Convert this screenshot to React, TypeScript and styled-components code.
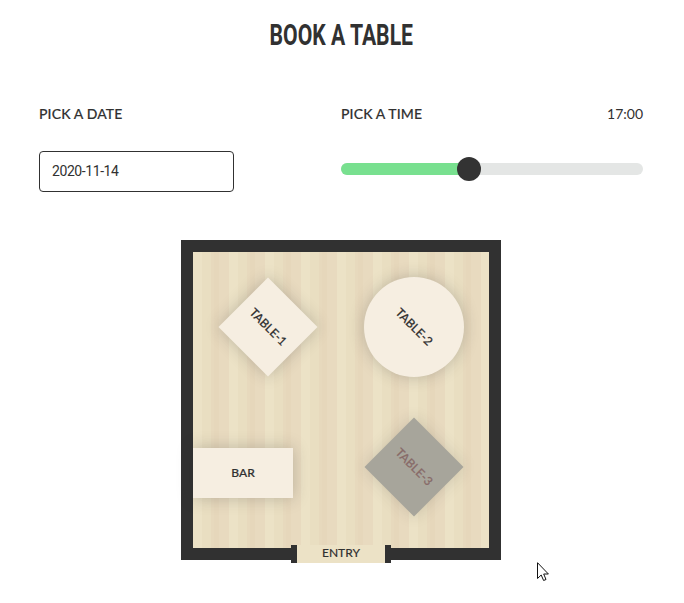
import React from "react";
import styled, { createGlobalStyle, css } from "styled-components";

const INK = "#313131";

const GlobalStyle = createGlobalStyle`
  * { box-sizing: border-box; }
  body {
    margin: 0;
    background: #fff;
    color: ${INK};
    font-family: Lato, "Open Sans", sans-serif;
    overflow: hidden;
  }
`;

const Page = styled.main`
  position: relative;
  display: flex;
  flex-direction: column;
  align-items: center;
  width: 684px;
  height: 603px;
`;

const Title = styled.h1`
  margin: 16px 2px 0 0;
  font: 700 29px/38px Roboto, sans-serif;
  white-space: nowrap;
  transform: scaleX(0.73);
`;

const Controls = styled.section`
  display: grid;
  grid-template-columns: 302px 302px;
  width: 604px;
  margin: 50px 2px 0 0;
`;

const Field = styled.div`
  display: flex;
  flex-direction: column;
`;

const Heading = styled.div`
  display: flex;
  justify-content: space-between;
  height: 20px;
  font-size: 14px;
  line-height: 20px;
`;

const Label = styled.label`
  font-weight: 500;
  letter-spacing: 0.12px;
  -webkit-text-stroke: 0.15px ${INK};
`;

const Time = styled.span`
  font-weight: 400;
`;

const DateInput = styled.input`
  width: 195px;
  height: 41px;
  margin-top: 27px;
  padding: 0 12px 1px;
  border: 1px solid ${INK};
  border-radius: 4px;
  background: #fff;
  color: ${INK};
  font: 400 14px Roboto, sans-serif;
  letter-spacing: -0.42px;
`;

const Track = styled.div`
  display: flex;
  align-items: center;
  height: 12px;
  margin-top: 39px;
  border-radius: 6px;
  background: #e4e6e5;
`;

const Fill = styled.div`
  width: 128px;
  height: 12px;
  border-radius: 6px 0 0 6px;
  background: #78e08f;
`;

const Thumb = styled.div`
  flex: none;
  width: 24px;
  height: 24px;
  margin-left: -12px;
  border-radius: 50%;
  background: #333;
`;

const Room = styled.section`
  position: relative;
  width: 320px;
  height: 320px;
  margin: 48px 2px 0 0;
  border: 12px solid ${INK};
  background: repeating-linear-gradient(
      90deg,
      #ece2c6 0 9px,
      #e9dec1 9px 18px,
      #e7d9bd 18px 21px,
      #e6d7bb 21px 26px,
      #e8dabf 26px 36px
    )
    padding-box;
`;

type Shape = "diamond" | "circle" | "bar";

const shapes = {
  diamond: css`
    width: 70px;
    height: 70px;
    transform: rotate(45deg);
  `,
  circle: css`
    width: 100px;
    height: 100px;
    border-radius: 50%;
    transform: rotate(45deg);
  `,
  bar: css`
    width: 100px;
    height: 50px;
    padding-bottom: 2px;
  `,
};

const Seat = styled.div<{ $shape: Shape; $x: number; $y: number; $booked?: boolean }>`
  position: absolute;
  left: ${(p) => p.$x}px;
  top: ${(p) => p.$y}px;
  display: flex;
  align-items: center;
  justify-content: center;
  padding-bottom: 1px;
  background: ${(p) => (p.$booked ? "#a7a59b" : "#f6eee1")};
  color: ${(p) => (p.$booked ? "#886b69" : INK)};
  box-shadow: 0 0 15px rgba(49, 49, 49, ${(p) => (p.$booked ? 0.17 : 0.25)});
  font-size: 12px;
  font-weight: 500;
  -webkit-text-stroke: 0.2px currentColor;
  white-space: nowrap;
  ${(p) => shapes[p.$shape]}
`;

const Entry = styled.div`
  position: absolute;
  left: 98px;
  top: 293px;
  width: 100px;
  height: 18px;
  border: solid ${INK};
  border-width: 0 6px;
  background: #ece2c6;
  font-size: 12px;
  font-weight: 500;
  line-height: 16px;
  text-align: center;
  -webkit-text-stroke: 0.1px ${INK};
`;

const Pointer = styled.svg`
  position: absolute;
  left: 537px;
  top: 562px;
`;

const seats: { name: string; shape: Shape; x: number; y: number; booked?: boolean }[] = [
  { name: "TABLE-1", shape: "diamond", x: 40, y: 40 },
  { name: "TABLE-2", shape: "circle", x: 171, y: 25 },
  { name: "BAR", shape: "bar", x: 0, y: 196 },
  { name: "TABLE-3", shape: "diamond", x: 186, y: 180, booked: true },
];

export default function App() {
  return (
    <>
      <GlobalStyle />
      <Page>
        <Title>BOOK A TABLE</Title>
        <Controls>
          <Field>
            <Heading>
              <Label htmlFor="date">PICK A DATE</Label>
            </Heading>
            <DateInput id="date" readOnly value="2020-11-14" />
          </Field>
          <Field>
            <Heading>
              <Label>PICK A TIME</Label>
              <Time>17:00</Time>
            </Heading>
            <Track>
              <Fill />
              <Thumb />
            </Track>
          </Field>
        </Controls>
        <Room>
          {seats.map((s) => (
            <Seat key={s.name} $shape={s.shape} $x={s.x} $y={s.y} $booked={s.booked}>
              {s.name}
            </Seat>
          ))}
          <Entry>ENTRY</Entry>
        </Room>
        <Pointer width="12" height="20" viewBox="0 0 12 20">
          <path
            d="M.5.7V16.5L4.2 13L6.6 18.5L9 17.5L6.7 12H11.4Z"
            fill="#fff"
            stroke="#111"
            strokeWidth="1"
          />
        </Pointer>
      </Page>
    </>
  );
}
